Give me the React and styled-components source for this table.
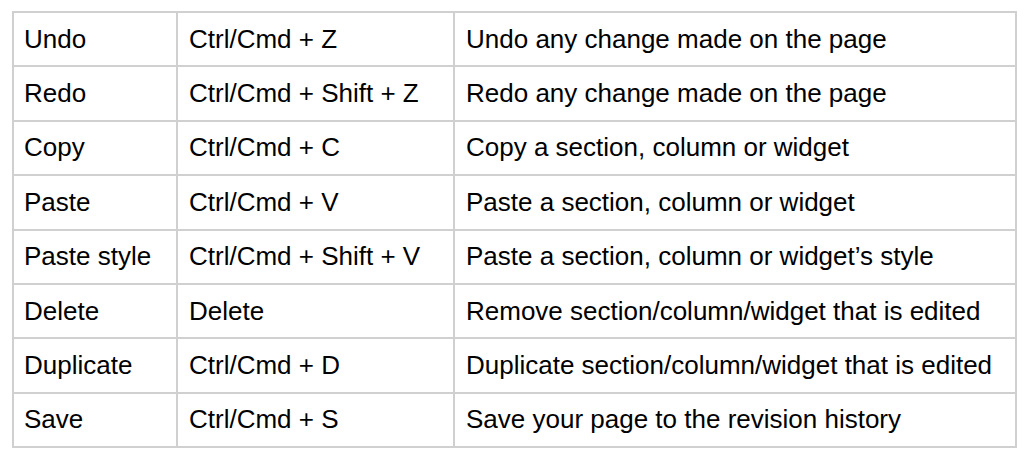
import React from 'react';
import styled, { createGlobalStyle } from 'styled-components';

const GlobalStyle = createGlobalStyle`
  html, body {
    margin: 0;
    padding: 0;
    background: #ffffff;
  }
  body {
    font-family: "Liberation Sans", Arial, sans-serif;
  }
`;

const Page = styled.div`
  padding: 11px 8px 0 12px;
`;

const Table = styled.table`
  width: 1003px;
  border-collapse: collapse;
  table-layout: fixed;
  border: 2px solid #d0d0d0;
`;

const Col = styled.col`
  width: ${props => props.w}px;
`;

const Row = styled.tr`
  height: 54.4px;
`;

const Cell = styled.td`
  border: 2px solid #d0d0d0;
  padding: 0 0 0 ${props => (props.first ? 10 : 11)}px;
  font-size: 26px;
  color: #000000;
  vertical-align: middle;
  white-space: nowrap;
  overflow: hidden;
`;

const shortcuts = [
  ['Undo', 'Ctrl/Cmd + Z', 'Undo any change made on the page'],
  ['Redo', 'Ctrl/Cmd + Shift + Z', 'Redo any change made on the page'],
  ['Copy', 'Ctrl/Cmd + C', 'Copy a section, column or widget'],
  ['Paste', 'Ctrl/Cmd + V', 'Paste a section, column or widget'],
  ['Paste style', 'Ctrl/Cmd + Shift + V', 'Paste a section, column or widget\u2019s style'],
  ['Delete', 'Delete', 'Remove section/column/widget that is edited'],
  ['Duplicate', 'Ctrl/Cmd + D', 'Duplicate section/column/widget that is edited'],
  ['Save', 'Ctrl/Cmd + S', 'Save your page to the revision history'],
];

const App = () => (
  <Page>
    <GlobalStyle />
    <Table>
      <colgroup>
        <Col w={164} />
        <Col w={277} />
        <Col w={562} />
      </colgroup>
      <tbody>
        {shortcuts.map(([action, keys, desc]) => (
          <Row key={action}>
            <Cell first>{action}</Cell>
            <Cell>{keys}</Cell>
            <Cell>{desc}</Cell>
          </Row>
        ))}
      </tbody>
    </Table>
  </Page>
);

export default App;
